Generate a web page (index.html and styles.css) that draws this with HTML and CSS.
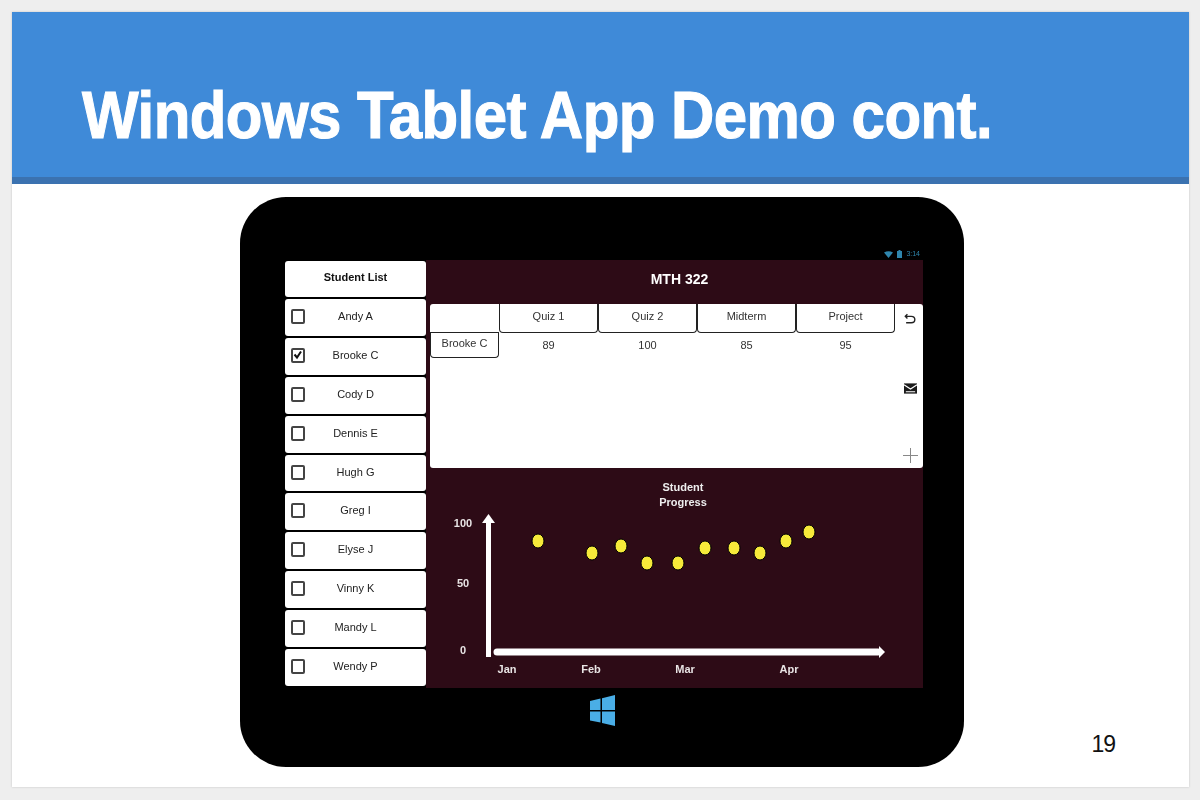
FILE: index.html
```html
<!DOCTYPE html>
<html lang="en">
  <head>
    <meta charset="UTF-8" />
    <title>Windows Tablet App Demo cont.</title>
    <link rel="stylesheet" href="styles.css">
  </head>
  <body>
    <div class="slide">
      <header class="slide-header">
        <h1>Windows Tablet App Demo cont.</h1>
      </header>

      <div class="slide-body">
        <div class="tablet">
          <div class="status-bar">
            <svg class="status-icon" width="9" height="7" viewBox="0 0 9 7"><path d="M0 1.5 Q4.5 -1 9 1.5 L4.5 7 Z" fill="#2f86ad" /></svg>
            <svg class="status-icon" width="5" height="8" viewBox="0 0 5 8"><path d="M1.5 0 H3.5 V1 H5 V8 H0 V1 H1.5 Z" fill="#2f86ad" /></svg>
            <span>3:14</span>
          </div>

          <div class="screen">
            <aside class="students">
              <div class="student student-head">Student List</div>
              <div class="student"><span class="check"></span>Andy A</div>
              <div class="student">
                <span class="check">
                  <svg width="10" height="10" viewBox="0 0 10 10"><path d="M1.5 4.5 L4 7.5 L8 1.5" fill="none" stroke="#111" stroke-width="2" /></svg>
                </span>Brooke C
              </div>
              <div class="student"><span class="check"></span>Cody D</div>
              <div class="student"><span class="check"></span>Dennis E</div>
              <div class="student"><span class="check"></span>Hugh G</div>
              <div class="student"><span class="check"></span>Greg I</div>
              <div class="student"><span class="check"></span>Elyse J</div>
              <div class="student"><span class="check"></span>Vinny K</div>
              <div class="student"><span class="check"></span>Mandy L</div>
              <div class="student"><span class="check"></span>Wendy P</div>
              <div class="student"></div>
            </aside>

            <main class="course">
              <h2>MTH 322</h2>

              <section class="grades">
                <div class="grade-table">
                  <div class="cell-head cell-blank"></div>
                  <div class="cell-head">Quiz 1</div>
                  <div class="cell-head">Quiz 2</div>
                  <div class="cell-head">Midterm</div>
                  <div class="cell-head">Project</div>
                  <div class="cell-name">Brooke C</div>
                  <div class="cell">89</div>
                  <div class="cell">100</div>
                  <div class="cell">85</div>
                  <div class="cell">95</div>
                </div>
                <div class="tools">
                  <svg width="12" height="11" viewBox="0 0 14 12"><path d="M4 1 L1.5 3.5 L4 6 M1.5 3.5 H8.5 C14 3.5 14 11 8.5 11 H2.5" fill="none" stroke="#222" stroke-width="1.6" /></svg>
                  <svg width="13" height="11" viewBox="0 0 14 11"><rect width="14" height="11" fill="#1a1a1a" /><path d="M0 1.5 L7 6 L14 1.5 M2 9 H12" fill="none" stroke="#fff" stroke-width="1.2" /></svg>
                  <svg width="15" height="15" viewBox="0 0 15 15"><path d="M7.5 0 V15 M0 7.5 H15" fill="none" stroke="#888" stroke-width="1" /></svg>
                </div>
              </section>

              <section class="progress">
                <svg class="chart" width="497" height="220" viewBox="426 468 497 220">
                  <text class="chart-title" x="683" y="491">Student</text>
                  <text class="chart-title" x="683" y="506">Progress</text>

                  <path class="axis-y" d="M488.5 657 V518" />
                  <path class="axis-head" d="M488.5 514 L495 523 H482 Z" />
                  <path class="axis-x" d="M497 652 H878" />
                  <path class="axis-head" d="M885 652 L879 646 V658 Z" />

                  <text class="chart-label" x="463" y="527">100</text>
                  <text class="chart-label" x="463" y="587">50</text>
                  <text class="chart-label" x="463" y="654">0</text>
                  <text class="chart-label" x="507" y="673">Jan</text>
                  <text class="chart-label" x="591" y="673">Feb</text>
                  <text class="chart-label" x="685" y="673">Mar</text>
                  <text class="chart-label" x="789" y="673">Apr</text>

                  <ellipse class="dot" cx="538" cy="541" rx="6" ry="7" />
                  <ellipse class="dot" cx="592" cy="553" rx="6" ry="7" />
                  <ellipse class="dot" cx="621" cy="546" rx="6" ry="7" />
                  <ellipse class="dot" cx="647" cy="563" rx="6" ry="7" />
                  <ellipse class="dot" cx="678" cy="563" rx="6" ry="7" />
                  <ellipse class="dot" cx="705" cy="548" rx="6" ry="7" />
                  <ellipse class="dot" cx="734" cy="548" rx="6" ry="7" />
                  <ellipse class="dot" cx="760" cy="553" rx="6" ry="7" />
                  <ellipse class="dot" cx="786" cy="541" rx="6" ry="7" />
                  <ellipse class="dot" cx="809" cy="532" rx="6" ry="7" />
                </svg>
              </section>
            </main>
          </div>

          <div class="home-bar">
            <svg width="25" height="31" viewBox="0 0 25 31">
              <path d="M0 6 L10.5 3.6 V15 H0 Z M12 3.2 L25 0 V15 H12 Z M0 16.5 H10.5 V27.6 L0 25.5 Z M12 16.5 H25 V31 L12 28 Z" fill="#4aaee6" />
            </svg>
          </div>
        </div>

        <div class="page-number">19</div>
      </div>
    </div>
  </body>
</html>
```

FILE: styles.css
```css
* {
  box-sizing: border-box;
  margin: 0;
  padding: 0;
}

html,
body {
  height: 100%;
  font-family: "Liberation Sans", Arial, sans-serif;
}

body {
  background-color: #eeeeee;
  padding: 12px 11px 13px 12px;
}

.slide {
  height: 100%;
  display: flex;
  flex-direction: column;
  background-color: white;
  box-shadow: 0 0 2px #c4c4c4;
}

.slide-header {
  height: 172px;
  padding: 74px 0 0 70px;
  background-color: #3f8ad8;
  border-bottom: 7px solid #3b72b0;
}

h1 {
  font-size: 60px;
  line-height: 60px;
  font-weight: bold;
  color: white;
  letter-spacing: -0.55px;
  white-space: nowrap;
  -webkit-text-stroke: 1px white;
  transform: scaleY(1.1);
  transform-origin: left center;
  filter: blur(0.5px);
}

.slide-body {
  flex: 1;
  position: relative;
  padding: 13px 0 0 228px;
}

.tablet {
  width: 724px;
  height: 570px;
  padding: 0 41px 0 45px;
  display: flex;
  flex-direction: column;
  background-color: black;
  border-radius: 46px;
}

.status-bar {
  height: 63px;
  display: flex;
  align-items: flex-end;
  justify-content: flex-end;
  gap: 4px;
  padding: 0 3px 2px 0;
  color: #2f86ad;
  font-size: 7px;
  line-height: 8px;
  filter: blur(0.4px);
}

.screen {
  height: 428px;
  display: flex;
  background-color: #2d0b16;
  filter: blur(0.5px);
}

.students {
  width: 141px;
  display: flex;
  flex-direction: column;
  gap: 2px;
  overflow: hidden;
  background-color: black;
}

.student {
  flex: none;
  position: relative;
  height: 36.9px;
  padding-bottom: 3px;
  display: flex;
  align-items: center;
  justify-content: center;
  background-color: white;
  border-radius: 3px;
  font-size: 11px;
  color: #222;
}

.student-head {
  height: 36px;
  margin-top: 1px;
  padding-bottom: 5px;
  font-weight: bold;
  color: #111;
}

.check {
  position: absolute;
  left: 6px;
  top: 10px;
  width: 14px;
  height: 15px;
  display: flex;
  align-items: center;
  justify-content: center;
  border: 2px solid #444;
  border-radius: 2px;
}

.course {
  flex: 1;
  display: flex;
  flex-direction: column;
}

h2 {
  height: 44px;
  padding-top: 10px;
  padding-left: 10px;
  font-size: 14px;
  line-height: 18px;
  font-weight: bold;
  color: white;
  text-align: center;
}

.grades {
  height: 164px;
  margin-left: 4px;
  display: flex;
  background-color: white;
  border-radius: 3px;
}

.grade-table {
  width: 465px;
  display: grid;
  grid-template-columns: 69px repeat(4, 99px);
  grid-template-rows: 29px 25px;
  font-size: 11px;
  color: #333;
}

.cell-head {
  padding-bottom: 4px;
  display: flex;
  align-items: center;
  justify-content: center;
  border: 1px solid #222;
  border-top: none;
  border-radius: 0 0 4px 4px;
}

.cell-blank {
  border: none;
  border-bottom: 1px solid #222;
  border-radius: 0;
}

.cell-name {
  padding-bottom: 5px;
  display: flex;
  align-items: center;
  justify-content: center;
  border: 1px solid #222;
  border-top: none;
  border-radius: 0 0 4px 4px;
}

.cell {
  padding-bottom: 2px;
  display: flex;
  align-items: center;
  justify-content: center;
}

.tools {
  flex: 1;
  display: flex;
  flex-direction: column;
  align-items: center;
  justify-content: space-between;
  padding: 9px 0 5px 2px;
}

.tools svg:nth-child(2) {
  margin-top: 4px;
}

.progress {
  flex: 1;
}

.chart {
  display: block;
}

.chart-title {
  font-size: 11px;
  font-weight: bold;
  fill: #eeeeee;
  text-anchor: middle;
}

.chart-label {
  font-size: 11px;
  font-weight: bold;
  fill: #e8e4e4;
  text-anchor: middle;
}

.axis-y {
  fill: none;
  stroke: white;
  stroke-width: 5;
}

.axis-x {
  fill: none;
  stroke: white;
  stroke-width: 7;
  stroke-linecap: round;
}

.axis-head {
  fill: white;
}

.dot {
  fill: #f6ea3a;
  stroke: black;
  stroke-width: 1;
}

.home-bar {
  flex: 1;
  display: flex;
  justify-content: center;
  padding: 7px 3px 0 0;
}

.page-number {
  position: absolute;
  right: 74px;
  bottom: 29px;
  font-size: 23px;
  line-height: 28px;
  color: #111;
  letter-spacing: -1px;
}
```
